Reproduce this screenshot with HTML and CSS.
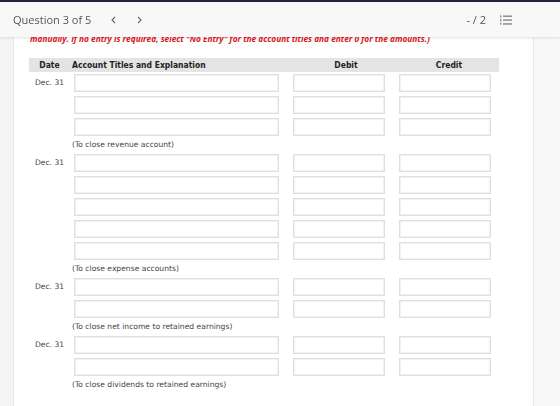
FILE: index.html
```html
<!DOCTYPE html>
<html lang="en">
<head>
  <meta charset="UTF-8" />
  <title>Question 3 of 5</title>
  <link rel="stylesheet" href="styles.css">
</head>
<body>
  <header class="topbar">
    <div class="q-nav">
      <span class="q-title">Question 3 of 5</span>
      <span class="chev first">
        <svg width="6" height="8" viewBox="0 0 6 8"><path d="M5 1 L2 4 L5 7" fill="none" stroke="#666" stroke-width="1.1"/></svg>
      </span>
      <span class="chev">
        <svg width="6" height="8" viewBox="0 0 6 8"><path d="M1 1 L4 4 L1 7" fill="none" stroke="#666" stroke-width="1.1"/></svg>
      </span>
    </div>
    <div class="q-tools">
      <span class="score">- / 2</span>
      <svg class="list-icon" width="12" height="10" viewBox="0 0 12 10">
        <rect x="0" y="0.5" width="1.4" height="1.2" fill="#666"/>
        <rect x="0" y="4.4" width="1.4" height="1.2" fill="#666"/>
        <rect x="0" y="8.3" width="1.4" height="1.2" fill="#666"/>
        <rect x="0" y="2.4" width="1.4" height="0.8" fill="#999"/>
        <rect x="0" y="6.4" width="1.4" height="0.8" fill="#999"/>
        <rect x="3" y="0.6" width="9" height="1.1" fill="#666"/>
        <rect x="3" y="4.5" width="9" height="1.1" fill="#666"/>
        <rect x="3" y="8.4" width="9" height="1.1" fill="#666"/>
      </svg>
    </div>
  </header>

  <div class="page">
    <div class="side"></div>
    <main class="panel">
      <p class="warn">manually. If no entry is required, select "No Entry" for the account titles and enter 0 for the amounts.)</p>

      <div class="journal" id="journal">
        <div class="head">Date</div>
        <div class="head left">Account Titles and Explanation</div>
        <div class="head">Debit</div>
        <div class="head">Credit</div>
      </div>
    </main>
    <div class="aside"></div>
  </div>

  <script>
    const entries = [
      { rows: 3, note: "(To close revenue account)" },
      { rows: 5, note: "(To close expense accounts)" },
      { rows: 2, note: "(To close net income to retained earnings)" },
      { rows: 2, note: "(To close dividends to retained earnings)" }
    ];

    const journal = document.getElementById("journal");

    entries.forEach(entry => {
      for (let i = 0; i < entry.rows; i++) {
        journal.insertAdjacentHTML("beforeend",
          `<div class="date">${i === 0 ? "Dec. 31" : ""}</div>` +
          `<div class="cell acct"><input type="text"></div>` +
          `<div class="cell"><input type="text"></div>` +
          `<div class="cell"><input type="text"></div>`
        );
      }
      journal.insertAdjacentHTML("beforeend",
        `<div></div><div class="note">${entry.note}</div><div></div><div></div>`
      );
    });
  </script>
</body>
</html>
```

FILE: styles.css
```css
body {
  margin: 0;
  padding: 0;
  background: #f7f7f7;
  font-family: "DejaVu Sans", sans-serif;
  overflow: hidden;
}

.topbar {
  position: fixed;
  top: 0;
  left: 0;
  right: 0;
  height: 35px;
  display: flex;
  justify-content: space-between;
  align-items: center;
  background: #f8f8f8;
  border-top: 2px solid #1d2340;
  box-shadow: 0 1px 3px rgba(0,0,0,0.12);
  font-family: "Open Sans", sans-serif;
  color: #555;
  z-index: 10;
}

.q-nav {
  display: flex;
  align-items: center;
  padding-left: 13px;
}

.q-title {
  font-size: 11px;
}

.chev {
  display: flex;
  margin-left: 21px;
}

.chev.first {
  margin-left: 19px;
}

.q-tools {
  display: flex;
  align-items: center;
  gap: 14px;
  padding-right: 48px;
}

.score {
  font-size: 11px;
}

.page {
  display: flex;
  min-height: 406px;
}

.side {
  width: 13px;
  background: #f5f5f5;
  border-right: 1px solid #e6e6e6;
}

.panel {
  width: 504px;
  background: #fff;
  padding: 33px 0 0 15px;
}

.aside {
  flex: 1;
  background: #f9f9f9;
  border-left: 1px solid #e8e8e8;
}

.warn {
  margin: 0 0 14px 1px;
  font-family: "Open Sans", sans-serif;
  font-size: 8.3px;
  font-weight: 700;
  font-style: italic;
  color: #dc161b;
  white-space: nowrap;
}

.journal {
  display: grid;
  grid-template-columns: 41px 223px 106px 100px;
  width: 470px;
  font-size: 7.6px;
  color: #444;
}

.head {
  height: 14px;
  line-height: 14px;
  background: #e4e4e4;
  font-family: "DejaVu Sans Condensed", "DejaVu Sans", sans-serif;
  font-size: 8.5px;
  font-weight: bold;
  color: #222;
  text-align: center;
}

.head.left {
  text-align: left;
  padding-left: 2px;
}

.date {
  height: 22px;
  line-height: 22px;
  text-align: center;
}

.cell {
  height: 22px;
  padding-top: 2px;
  box-sizing: border-box;
}

.cell.acct {
  padding-left: 4px;
}

.cell input {
  display: block;
  width: 92px;
  height: 18px;
  margin: 0;
  padding: 0;
  box-sizing: border-box;
  border: 1px solid #dedede;
  box-shadow: inset 0 0 0 1px #f2f2f2;
  background: #fff;
}

.cell.acct input {
  width: 205px;
}

.note {
  height: 14px;
  line-height: 14px;
  padding-left: 2px;
}
```
